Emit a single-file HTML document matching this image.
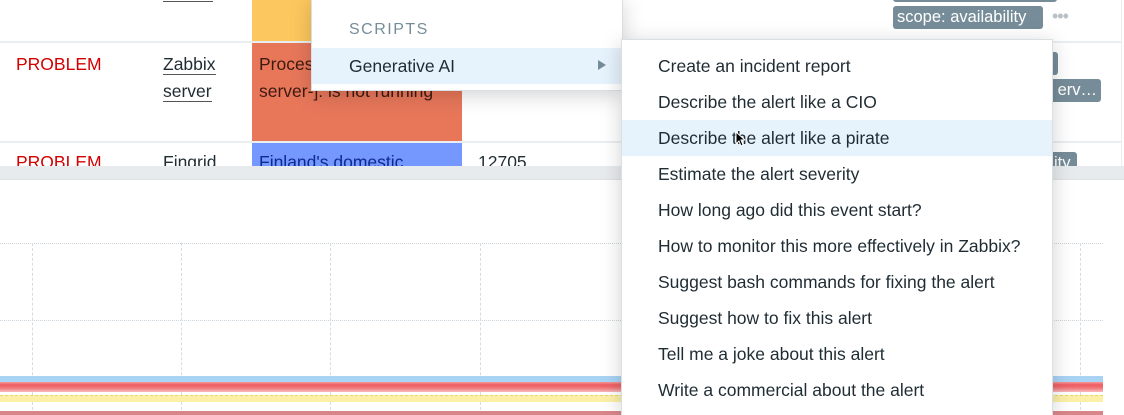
<!DOCTYPE html>
<html style="overflow:hidden;height:415px"><head><meta charset="utf-8"><style>
*{margin:0;padding:0;box-sizing:border-box}
body{width:1124px;height:415px;overflow:hidden;background:#fff;font-family:"Liberation Sans",Arial,sans-serif;font-size:17.5px;color:#1f2c33;position:relative}
.a{position:absolute}
.prob{color:#d40000}
.u{border-bottom:1px solid #555}
.tag{position:absolute;background:#768d99;color:#fff;border-radius:3px;height:23px;line-height:23px;padding:0 4px;font-size:16.5px;white-space:nowrap;overflow:hidden}
.hl{position:absolute;height:0;border-top:1px dotted #c9d3d9}
.vl{position:absolute;width:0;border-left:1px dashed #d4dde2;top:243px;height:172px}
.menu{position:absolute;background:#fff;border:1px solid #d9dfe3;box-shadow:0 4px 20px rgba(0,0,0,.18);overflow:hidden}
.item{position:absolute;left:0;right:0;height:36px;line-height:36px;padding-left:36px;white-space:nowrap}
</style></head><body>
<div class="a" style="left:0;top:41px;width:1122px;border-top:2px solid #ebeef0"></div>
<div class="a" style="left:0;top:141px;width:1122px;border-top:2px solid #ebeef0"></div>
<div class="a" style="left:1121px;top:0;height:166px;border-left:1px solid #ebeef0"></div>
<div class="a u" style="left:163px;top:0;width:50px;height:2px"></div>
<div class="a" style="left:252px;top:0;width:210px;height:41px;background:#fcc75e"></div>
<div class="a" style="left:252px;top:43px;width:210px;height:98px;background:#e8775a"></div>
<div class="a" style="left:252px;top:143px;width:210px;height:23px;background:#7498fd"></div>
<div class="a prob" style="left:16px;top:54px">PROBLEM</div>
<div class="a" style="left:163px;top:51px;line-height:27px"><span class="u">Zabbix</span><br><span class="u">server</span></div>
<div class="a" style="left:259px;top:51px;line-height:27px;color:#3d1a10">Proces<br>server-]: is not running</div>
<div class="a" style="left:0;top:143px;width:1122px;height:23px;overflow:hidden">
 <div class="a prob" style="left:16px;top:9px">PROBLEM</div>
 <div class="a" style="left:163px;top:9px">Fingrid</div>
 <div class="a" style="left:259px;top:9px;color:#0e2a8f">Finland's domestic</div>
 <div class="a" style="left:478px;top:9px">12705</div>
 <div class="tag" style="left:1050px;top:9px;width:27px">ity</div>
</div>
<div class="tag" style="left:893px;top:-21px;width:164px"></div>
<div class="tag" style="left:893px;top:6px;width:150px">scope: availability</div>
<div class="a" style="left:1052px;top:6px;color:#b7c2c8;font-size:18px;letter-spacing:-1px">•••</div>
<div class="tag" style="left:1040px;top:52px;width:18px"></div>
<div class="tag" style="left:1040px;top:79px;width:61px;text-align:right">erv…</div>
<div class="a" style="left:0;top:166px;width:1124px;height:14px;background:#e8ebee;border-bottom:1px solid #dde2e5"></div>
<div class="hl" style="left:0;top:243px;width:1103px"></div>
<div class="hl" style="left:0;top:320px;width:1103px"></div>
<div class="vl" style="left:32px"></div><div class="vl" style="left:181px"></div><div class="vl" style="left:330px"></div><div class="vl" style="left:480px"></div><div class="vl" style="left:1080px"></div>
<div class="a" style="left:0;top:376px;width:1103px;height:6px;background:#a9d3f5"></div>
<div class="a" style="left:0;top:382px;width:1103px;height:10px;background:linear-gradient(#f59a9c,#ef5b60 30%,#f0787c 60%,#f9b9bc)"></div>
<div class="a" style="left:0;top:395px;width:1103px;height:7px;background:#fcf0a8;border-top:1px dashed #e9d86a"></div>
<div class="a" style="left:0;top:411px;width:1103px;height:4px;background:#d88589"></div>
<div class="menu" style="left:311px;top:-2px;width:312px;height:93px">
 <div class="a" style="left:37px;top:22px;color:#768d99;font-size:16px;letter-spacing:1.5px">SCRIPTS</div>
 <div class="item" style="top:49px;background:#e6f2fc;padding-left:37px">Generative AI</div>
 <div class="a" style="left:286px;top:61px;width:0;height:0;border-left:8px solid #768d99;border-top:5px solid transparent;border-bottom:5px solid transparent"></div>
</div>
<div class="menu" style="left:621px;top:39px;width:432px;height:376px;border-bottom:none">
 <div class="item" style="top:8px">Create an incident report</div>
 <div class="item" style="top:44px">Describe the alert like a CIO</div>
 <div class="item" style="top:80px;background:#e6f2fc">Describe the alert like a pirate</div>
 <div class="item" style="top:116px">Estimate the alert severity</div>
 <div class="item" style="top:152px">How long ago did this event start?</div>
 <div class="item" style="top:188px">How to monitor this more effectively in Zabbix?</div>
 <div class="item" style="top:224px">Suggest bash commands for fixing the alert</div>
 <div class="item" style="top:260px">Suggest how to fix this alert</div>
 <div class="item" style="top:296px">Tell me a joke about this alert</div>
 <div class="item" style="top:332px">Write a commercial about the alert</div>
 <svg class="a" style="left:113px;top:91px" width="10" height="16" viewBox="0 0 10 16"><path d="M1 1 L1 13 L4 10 L6 15 L8 14 L6 9 L10 9 Z" fill="#000" stroke="#fff" stroke-width="1"/></svg>
</div>
</body></html>
